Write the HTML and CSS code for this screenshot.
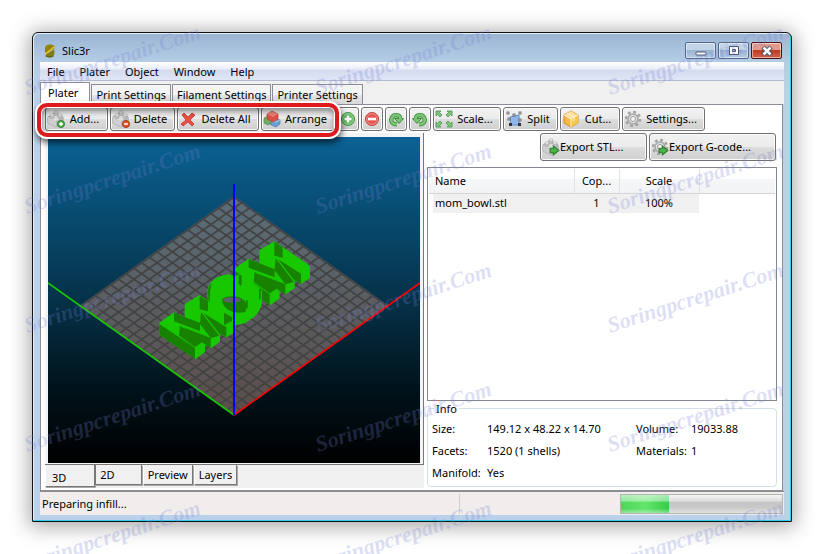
FILE: index.html
```html
<!DOCTYPE html>
<html lang="en">
<head>
<meta charset="utf-8">
<title>Slic3r</title>
<link rel="stylesheet" href="styles.css">
</head>
<body>
<svg class="defs" aria-hidden="true">
  <defs>
    <symbol id="brick" viewBox="0 0 18 18">
      <path d="M1 7 8 3l8 4v6l-7 4-8-4z" fill="#dedede" stroke="#9a9a9a"/>
      <path d="m1 7 8 4 7-4v6l-7 4-8-4z" fill="#cfcfcf"/>
      <path d="M9 11v6l7-4V7z" fill="#b9b9b9"/>
      <path d="M3 5v3q2 1.500 4 0V5zM7 2v3q2 1.500 4 0V2zM11 5v3q2 1.500 4 0V5z" fill="#c4c4c4" stroke="#a2a2a2" stroke-width=".6"/>
      <g fill="#f5f5f5" stroke="#a2a2a2" stroke-width=".6"><ellipse cx="5" cy="5" rx="2" ry="1.200"/><ellipse cx="9" cy="2" rx="2" ry="1.200"/><ellipse cx="13" cy="5" rx="2" ry="1.200"/></g>
    </symbol>
    <symbol id="gear" viewBox="0 0 18 18">
      <circle cx="9" cy="9" r="7" fill="none" stroke="#a0a0a0" stroke-width="2.400" stroke-dasharray="2.750 2.750"/>
      <circle cx="9" cy="9" r="5" fill="#e2e2e2" stroke="#a4a4a4" stroke-width="1.600"/>
      <circle cx="9" cy="9" r="2.500" fill="#fafafa" stroke="#999"/>
    </symbol>
    <symbol id="go" viewBox="0 0 10 10"><path d="M1 3h3V1l5 4-5 4V7H1z" fill="#4cb24a" stroke="#2b7d2c"/></symbol>
    <symbol id="turn" viewBox="0 0 16 16">
      <path d="M9 13.500C4.500 13.500 2.500 10.500 3.500 7.500 5 3 11 3 12.500 7" fill="none" stroke="#3b8c3a" stroke-width="4.200"/>
      <path d="M6.500 7.500H15.500L11 12.500z" fill="#7cc576" stroke="#3b8c3a"/>
      <path d="M9 13.500C4.500 13.500 2.500 10.500 3.500 7.500 5 3 11 3 12.500 7v1.500" fill="none" stroke="#7cc576" stroke-width="2.600"/>
    </symbol>
    <symbol id="corner" viewBox="0 0 8 8"><path d="M1 1h5L4.500 2.500 7 5 5 7 2.500 4.500 1 6z" fill="#82c27b" stroke="#43964a" stroke-width=".8"/></symbol>
  </defs>
</svg>

<div class="window">
  <header class="titlebar">
    <svg class="logo" viewBox="0 0 14 16" aria-hidden="true">
      <path d="M2 2q5-3 10 0v3L2 11Q0 7 2 2z" fill="#8f8709"/><path d="M12 6 2 12v2q5 3 9 0 2-4 1-8z" fill="#7e7c12"/>
      <path d="M1 12 12 3" stroke="#f1c21a" stroke-width="1.600"/><path d="M2 14q5 2 9 0" stroke="#5a5310" fill="none"/>
    </svg>
    <h1>Slic3r</h1>
    <div class="controls">
      <button aria-label="Minimize"><svg viewBox="0 0 14 12"><rect x="2" y="7" width="10" height="3" rx=".5" fill="#fff" stroke="#48546b"/></svg></button>
      <button aria-label="Maximize"><svg viewBox="0 0 14 12"><path d="M2.500 1.500h9v8h-9zM5.500 4.500h3v2h-3z" fill="#fff" fill-rule="evenodd" stroke="#48546b"/></svg></button>
      <button class="close" aria-label="Close"><svg viewBox="0 0 14 12"><path d="m3 2 8 8M11 2l-8 8" stroke="#454f66" stroke-width="4.500"/><path d="m3.500 2.500 7 7M10.500 2.500l-7 7" stroke="#fff" stroke-width="2.500"/></svg></button>
    </div>
  </header>

  <nav class="menu">
    <button>File</button><button>Plater</button><button>Object</button><button>Window</button><button>Help</button>
  </nav>

  <div class="tabs">
    <button class="active">Plater</button><button>Print Settings</button><button>Filament Settings</button><button>Printer Settings</button>
  </div>

  <main class="panel">
    <div class="toolbar">
      <div class="marked">
        <button class="tool w-add"><svg viewBox="0 0 18 18"><use href="#brick" width="18" height="18"/><circle cx="14" cy="14" r="3.500" fill="#55b04d" stroke="#2e8430"/><path d="M14 12v4M12 14h4" stroke="#fff" stroke-width="1.300"/></svg><span>Add...</span></button>
        <button class="tool w-del"><svg viewBox="0 0 18 18"><use href="#brick" width="18" height="18"/><circle cx="14" cy="14" r="3.500" fill="#d9582a" stroke="#a83b16"/><path d="M12 14h4" stroke="#fff" stroke-width="1.500"/></svg><span>Delete</span></button>
        <button class="tool w-all"><svg viewBox="0 0 18 18"><path d="M3 5 5 3l4 4 4-4 3 2-5 5 4 4-2 2-4-4-5 4-2-2 5-4z" fill="#ea4f43" stroke="#c5362d" stroke-width=".8"/></svg><span>Delete All</span></button>
        <button class="tool w-arr"><svg viewBox="0 0 18 18"><path d="m1 8 4-2 4 2v5l-4 2-4-2z" fill="#6fae63" stroke="#4a8546" stroke-width=".6"/><path d="m8 10 4-2 5 2v4l-4 3-5-2z" fill="#6b9fd4" stroke="#3c6ea8" stroke-width=".6"/><path d="m8 10 5 2 4-2" fill="none" stroke="#a8c9ec"/><path d="m4 4 5-3 6 3v5l-5 3-6-3z" fill="#dd5145" stroke="#b93a33" stroke-width=".6"/><path d="m4 4 6 3 5-3-6-3z" fill="#f0847a"/></svg><span>Arrange</span></button>
      </div>
      <button class="tool mini" aria-label="More copies"><svg viewBox="0 0 16 16"><circle cx="8" cy="8" r="6.500" fill="#63bb60" stroke="#3f8f41"/><circle cx="8" cy="8" r="5.400" fill="none" stroke="#a9dba5" stroke-width=".8"/><path d="M8 4.500v7M4.500 8h7" stroke="#fff" stroke-width="2.400"/></svg></button>
      <button class="tool mini" aria-label="Fewer copies"><svg viewBox="0 0 16 16"><circle cx="8" cy="8" r="6.500" fill="#e4574f" stroke="#c23f3a"/><circle cx="8" cy="8" r="5.400" fill="none" stroke="#f3a19a" stroke-width=".8"/><path d="M4 8h8" stroke="#fff" stroke-width="2.600"/></svg></button>
      <button class="tool mini" aria-label="Rotate left"><svg viewBox="0 0 16 16"><use href="#turn" width="16" height="16"/></svg></button>
      <button class="tool mini" aria-label="Rotate right"><svg viewBox="0 0 16 16"><use href="#turn" width="16" height="16" transform="matrix(-1 0 0 1 16 0)"/></svg></button>
      <button class="tool w-scale"><svg viewBox="0 0 18 18"><use href="#corner" width="8" height="8"/><use href="#corner" width="8" height="8" transform="matrix(-1 0 0 1 18 0)"/><use href="#corner" width="8" height="8" transform="matrix(1 0 0 -1 0 18)"/><use href="#corner" width="8" height="8" transform="matrix(-1 0 0 -1 18 18)"/></svg><span>Scale...</span></button>
      <button class="tool w-split"><svg viewBox="0 0 18 18"><path d="M5 7 14 5v10H6z" fill="#8fb7ec" stroke="#5e8fd2"/><g fill="#fff" stroke="#666" stroke-width=".9"><rect x="2" y="2" width="2" height="2"/><rect x="8" y="4" width="2" height="2"/><rect x="14" y="2" width="2" height="2"/><rect x="3" y="8" width="2" height="2"/><rect x="14" y="9" width="2" height="2"/></g><path d="M4 13h3v3H4zM13 13h3v3h-3z" fill="#333"/></svg><span>Split</span></button>
      <button class="tool w-cut"><svg viewBox="0 0 18 18"><path d="m2 5 7-4 7 4v8l-7 4-7-4z" fill="#f6b944" stroke="#d98a1c"/><path d="m2 5 7 4 7-4-7-4z" fill="#fbe0a0"/><path d="M9 9v8l7-4V5z" fill="#f3c94b"/><path d="m5 3 7 4v4M2 5l7 4v8M9 9l7-4" fill="none" stroke="#fff4d4"/></svg><span>Cut...</span></button>
      <button class="tool w-set"><svg viewBox="0 0 18 18"><use href="#gear" width="18" height="18"/></svg><span>Settings...</span></button>
    </div>

    <div class="workspace">
      <section class="preview">
        <div class="frame">
          <svg class="scene" viewBox="0 0 372 326" preserveAspectRatio="xMidYMid slice" role="img" aria-label="3D view of the print bed">
            <defs>
              <linearGradient id="sky" x2="0" y2="1"><stop offset="0" stop-color="#0a6294"/><stop offset=".5" stop-color="#053249"/><stop offset=".78" stop-color="#01121a"/><stop offset="1" stop-color="#000"/></linearGradient>
              <linearGradient id="bed" x2="0" y2="1"><stop offset="0" stop-color="#5a6d78"/><stop offset=".6" stop-color="#5a5a5c"/><stop offset="1" stop-color="#5b4d49"/></linearGradient>
              <pattern id="grid" width="1" height="1" patternUnits="userSpaceOnUse" patternTransform="matrix(7.700 5.475 -7.700 5.475 186 59)"><path d="M0 0H1M0 0V1" stroke="#434343" stroke-width=".42"/></pattern>
              <g id="em">
                <path fill="#17c800" d="m28 308 44-31 32 15v-40l45-27 107 73v37l-26 17-20-10v23l-26 19-19-10v22l-28 21-109-72z"/>
                <path fill="#178200" d="m28 312 107 71v34L28 345zM90 317l71 47-26 17-48-34zM72 278l78 31v24l-78-29zM149 227l25 16v31l-25-6zM153 276l55 71-26 7-32-42zM100 322l82 32v29l-18-10zM160 279l69 43v30l-21-11z"/>
              </g>
            </defs>
            <path d="M0 0h372v326H0z" fill="url(#sky)"/>
            <path d="m186 59 154 109.500L186 278 32 168.500z" fill="url(#bed)"/>
            <path d="m186 59 154 109.500L186 278 32 168.500z" fill="url(#grid)"/>
            <g transform="translate(102 83) scale(.3333)">
              <use href="#em" x="224" y="-161"/>
              <path fill="#17c800" d="M172 210q6-32 42-43l22-4 20 5 20-8 40 34q18 10 20 22v34q-8 34-34 48-18 16-44 17-20-4-30-18l-54-25z"/>
              <path fill="#178200" d="M174 208q4-14 12-20-10 30-6 86h-4zM216 236q20-12 52-4 24 10 22 30l-4 14q-24 6-46-4-24-12-24-36zM266 166h9v32l-9-6zM327 207h5v28l-5 6zM288 240h5v24l-5 2z"/>
              <ellipse cx="246" cy="240" rx="27" ry="8" fill="#5b6064"/>
              <use href="#em"/>
              <path fill="#178200" d="m222 278 25 14-1 11-24 13z"/>
            </g>
            <path d="m0 146 186 132" stroke="#17c800" stroke-width="1.600"/>
            <path d="M372 146 186 278" stroke="#f00" stroke-width="1.600"/>
            <path d="M186 47v231" stroke="#00f" stroke-width="2"/>
          </svg>
        </div>
        <div class="viewtabs">
          <button class="active">3D</button><button class="wide">2D</button><button>Preview</button><button>Layers</button>
        </div>
      </section>

      <section class="side">
        <div class="export">
          <button class="tool w-stl"><svg viewBox="0 0 18 18"><use href="#brick" width="18" height="18"/><use href="#go" x="7" y="7" width="11" height="11"/></svg><span>Export STL...</span></button>
          <button class="tool w-gcode"><svg viewBox="0 0 18 18"><use href="#gear" width="18" height="18"/><use href="#go" x="7" y="7" width="11" height="11"/></svg><span>Export G-code...</span></button>
        </div>
        <div class="list">
          <table>
            <colgroup><col class="c-name"><col class="c-copies"><col class="c-scale"><col></colgroup>
            <thead><tr><th>Name</th><th>Cop...</th><th>Scale</th><th></th></tr></thead>
            <tbody><tr><td>mom_bowl.stl</td><td>1</td><td>100%</td><td></td></tr></tbody>
          </table>
        </div>
        <fieldset>
          <legend>Info</legend>
          <dl>
            <dt>Size:</dt><dd>149.12 x 48.22 x 14.70</dd><dt>Volume:</dt><dd>19033.88</dd>
            <dt>Facets:</dt><dd>1520 (1 shells)</dd><dt>Materials:</dt><dd>1</dd>
            <dt>Manifold:</dt><dd>Yes</dd>
          </dl>
        </fieldset>
      </section>
    </div>
  </main>

  <footer class="status">
    <label for="job">Preparing infill...</label>
    <div class="cell"></div>
    <progress id="job" max="100" value="30"></progress>
  </footer>
</div>

<svg class="watermark" aria-hidden="true">
  <defs>
    <g id="row">
      <text transform="translate(27 95) rotate(-18)">Soringpcrepair.Com</text>
      <text transform="translate(318 95) rotate(-18)">Soringpcrepair.Com</text>
      <text transform="translate(610 95) rotate(-18)">Soringpcrepair.Com</text>
    </g>
  </defs>
  <use href="#row"/><use href="#row" y="119"/><use href="#row" y="238"/><use href="#row" y="357"/><use href="#row" y="476"/>
</svg>
</body>
</html>
```
FILE: styles.css
```css
* { box-sizing: border-box; }

body {
  margin: 0;
  height: 100vh;
  min-height: 500px;
  padding: 32px;
  background: #fff;
  color: #000;
  font: 11px/16px "Noto Sans", "Open Sans", sans-serif;
  position: relative;
  overflow: hidden;
}

button { font: inherit; color: inherit; margin: 0; }
.defs { position: absolute; width: 0; height: 0; }

.window {
  height: 100%;
  display: flex;
  flex-direction: column;
  padding: 0 7px 6px;
  border: 1px solid #111;
  border-radius: 6px 6px 0 0;
  background: linear-gradient(#9bb5d2, #b4cce6 29px, #b9d1ea 60px);
  box-shadow: inset -1px -1px #2fd0ee, inset 1px 1px #e6f0fa, 0 2px 20px 3px rgba(0, 0, 0, .34);
}

/* Title bar */
.titlebar {
  flex: none;
  height: 29px;
  display: flex;
  align-items: center;
  padding: 6px 2px 0 4px;
}
.logo { width: 12px; height: 16px; }
h1 { margin: 0 auto 0 6px; font-size: 11px; font-weight: 400; }
.controls { display: flex; gap: 2px; }
.controls button {
  width: 31px;
  height: 17px;
  padding: 0;
  display: grid;
  place-items: center;
  border: 1px solid #56688a;
  border-radius: 2px;
  background: linear-gradient(#c3d4e8 50%, #99b2d0 50%, #b4cce4);
  box-shadow: inset 0 0 0 1px rgba(255, 255, 255, .5);
}
.controls svg { width: 14px; height: 12px; }
.controls .close {
  border-color: #4a1416;
  background: linear-gradient(#e39a8d 50%, #bb3d26 50%, #d7614a);
}

/* Menu */
.menu {
  flex: none;
  height: 19px;
  display: flex;
  align-items: center;
  gap: 15px;
  padding: 1px 7px 0;
  border-bottom: 1px solid #b3bad0;
  background: linear-gradient(#fff, #e8ecf7 40%, #d4dbef 45%, #e0e6f6);
}
.menu button { padding: 0; border: 0; background: none; }

/* Page tabs */
.tabs {
  flex: none;
  height: 23px;
  display: flex;
  align-items: flex-end;
  gap: 1px;
  background: #f0f0f0;
}
.tabs button {
  height: 20px;
  padding: 1px 4px 0;
  border: 1px solid #8b8e99;
  border-bottom: 0;
  background: linear-gradient(#f4f4f4 50%, #e4e4e4 50%, #d8d8d8);
}
.tabs .active {
  height: 22px;
  padding: 0 11px 2px 7px;
  background: #fff;
}

/* Plater panel */
.panel {
  flex: 1;
  min-height: 0;
  display: flex;
  flex-direction: column;
  gap: 2px;
  margin-right: 1px;
  padding: 2px 5px 2px 4px;
  border: 1px solid #8b8e99;
  background: #fff;
}
.toolbar, .marked { display: flex; gap: 2px; }
.marked { position: relative; }
.marked::after {
  content: "";
  position: absolute;
  inset: -4px -4px -6px -8px;
  border: 4px solid #dd1a1c;
  border-radius: 10px;
  box-shadow: 0 0 0 2px #fff, 1px 4px 6px 2px rgba(0, 0, 0, .6),
    inset 0 0 0 1px #fff, inset 1px 3px 6px 1px rgba(0, 0, 0, .5);
  pointer-events: none;
}
.tool {
  height: 24px;
  flex: none;
  display: flex;
  align-items: center;
  padding: 0 1px;
  border: 1px solid #717171;
  border-radius: 3px;
  background: linear-gradient(#f2f2f2, #ebebeb 50%, #dddddd 50%, #cfcfcf);
  box-shadow: inset 0 0 0 1px #fafafa;
}
.tool svg { flex: none; width: 18px; height: 18px; }
.tool span { flex: 1; padding-right: 2px; text-align: center; white-space: nowrap; }
.mini { width: 22px; justify-content: center; }
.mini svg { width: 16px; height: 16px; }
.w-add { width: 63px; }
.w-del { width: 65px; }
.w-all { width: 82px; }
.w-arr { width: 74px; }
.w-scale { width: 68px; }
.w-split { width: 55px; }
.w-cut { width: 60px; }
.w-set { width: 83px; }

.workspace {
  flex: 1;
  min-height: 0;
  display: grid;
  grid-template-columns: 379fr 350fr;
  gap: 3px;
}

/* 3D preview */
.preview { display: flex; flex-direction: column; min-height: 0; min-width: 0; background: #f0f0f0; }
.frame {
  flex: 1;
  min-height: 0;
  padding: 4px 3px 1px;
  border-right: 1px solid #777;
  border-bottom: 1px solid #777;
  background: #f4f4f4;
}
.scene { display: block; width: 100%; height: 100%; }
.viewtabs { flex: none; height: 23px; display: flex; align-items: flex-start; }
.viewtabs button {
  height: 20px;
  margin-right: 1px;
  padding: 0 4px;
  border: 1px solid #777;
  border-top: 0;
  border-left-color: #fff;
  background: #f0f0f0;
  box-shadow: 1px 1px #aaa;
}
.viewtabs .wide { padding-right: 26px; border-left-color: #777; }
.viewtabs .active { height: 22px; margin-right: 0; padding: 4px 28px 0 6px; border-left-color: #fff; }

/* Right column */
.side { display: flex; flex-direction: column; min-width: 0; min-height: 0; }
.export { display: flex; justify-content: flex-end; gap: 2px; padding-right: 1px; }
.export .tool { height: 28px; }
.export .tool span { padding: 0; text-align: left; }
.w-stl { width: 107px; }
.w-gcode { width: 127px; }

.list { flex: 1; min-height: 0; margin-top: 6px; padding: 1px; border: 1px solid #828790; background: #fff; }
table { width: 100%; table-layout: fixed; border-collapse: collapse; }
.c-name { width: 145px; }
.c-copies { width: 45px; }
.c-scale { width: 80px; }
th {
  height: 24px;
  padding: 1px 0 0;
  font-weight: 400;
  border-right: 1px solid #e0e3e8;
  border-bottom: 1px solid #d5d5d5;
  background: linear-gradient(#fff 40%, #f5f6f8 42%, #f2f3f5);
}
td { height: 20px; padding: 0; text-align: center; background: #f0f0f0; border-top: 1px solid #fff; }
th:first-child, td:first-child { padding-left: 6px; text-align: left; }
td:first-child { background: linear-gradient(90deg, #fff 4px, #f0f0f0 4px); }
th:last-child { border-right: 0; }
td:last-child { background: none; }

fieldset {
  flex: none;
  min-width: 0;
  margin: 0 0 1px;
  padding: 2px 4px;
  border: 1px solid #d5dfe5;
  border-radius: 4px;
}
legend { margin-left: 2px; padding: 0 2px; line-height: 15px; }
dl {
  display: grid;
  grid-template-columns: 55px 149px 55px 1fr;
  margin: 0;
  line-height: 22px;
  white-space: nowrap;
}
dd { margin: 0; }

/* Status bar */
.status {
  flex: none;
  height: 24px;
  display: flex;
  align-items: center;
  border-top: 1px solid #8e8e8e;
  padding: 0 1px 0 2px;
  background: #f0edec;
}
.status label { flex: 418; }
.status .cell { flex: 160; height: 20px; border-left: 1px solid #d2d0cf; }
progress {
  flex: none;
  width: 163px;
  height: 20px;
  appearance: none;
  border: 1px solid #b4b4b4;
}
progress::-webkit-progress-bar { background: linear-gradient(#f4f4f4, #dcdcdc 35%, #c5c5c5 40%, #c9c9c9 70%, #e2e2e2); }
progress::-webkit-progress-value { background: linear-gradient(rgba(255, 255, 255, .6), rgba(255, 255, 255, .4) 35%, transparent 38%, transparent 75%, rgba(255, 255, 255, .4)), linear-gradient(90deg, #4bd65a, #63e56c 50%, #37cb49); }

.watermark {
  position: absolute;
  inset: 0;
  width: 100%;
  height: 100%;
  pointer-events: none;
  fill: #7680d2;
  fill-opacity: .26;
  font: italic bold 22px "Liberation Serif", serif;
}
```
